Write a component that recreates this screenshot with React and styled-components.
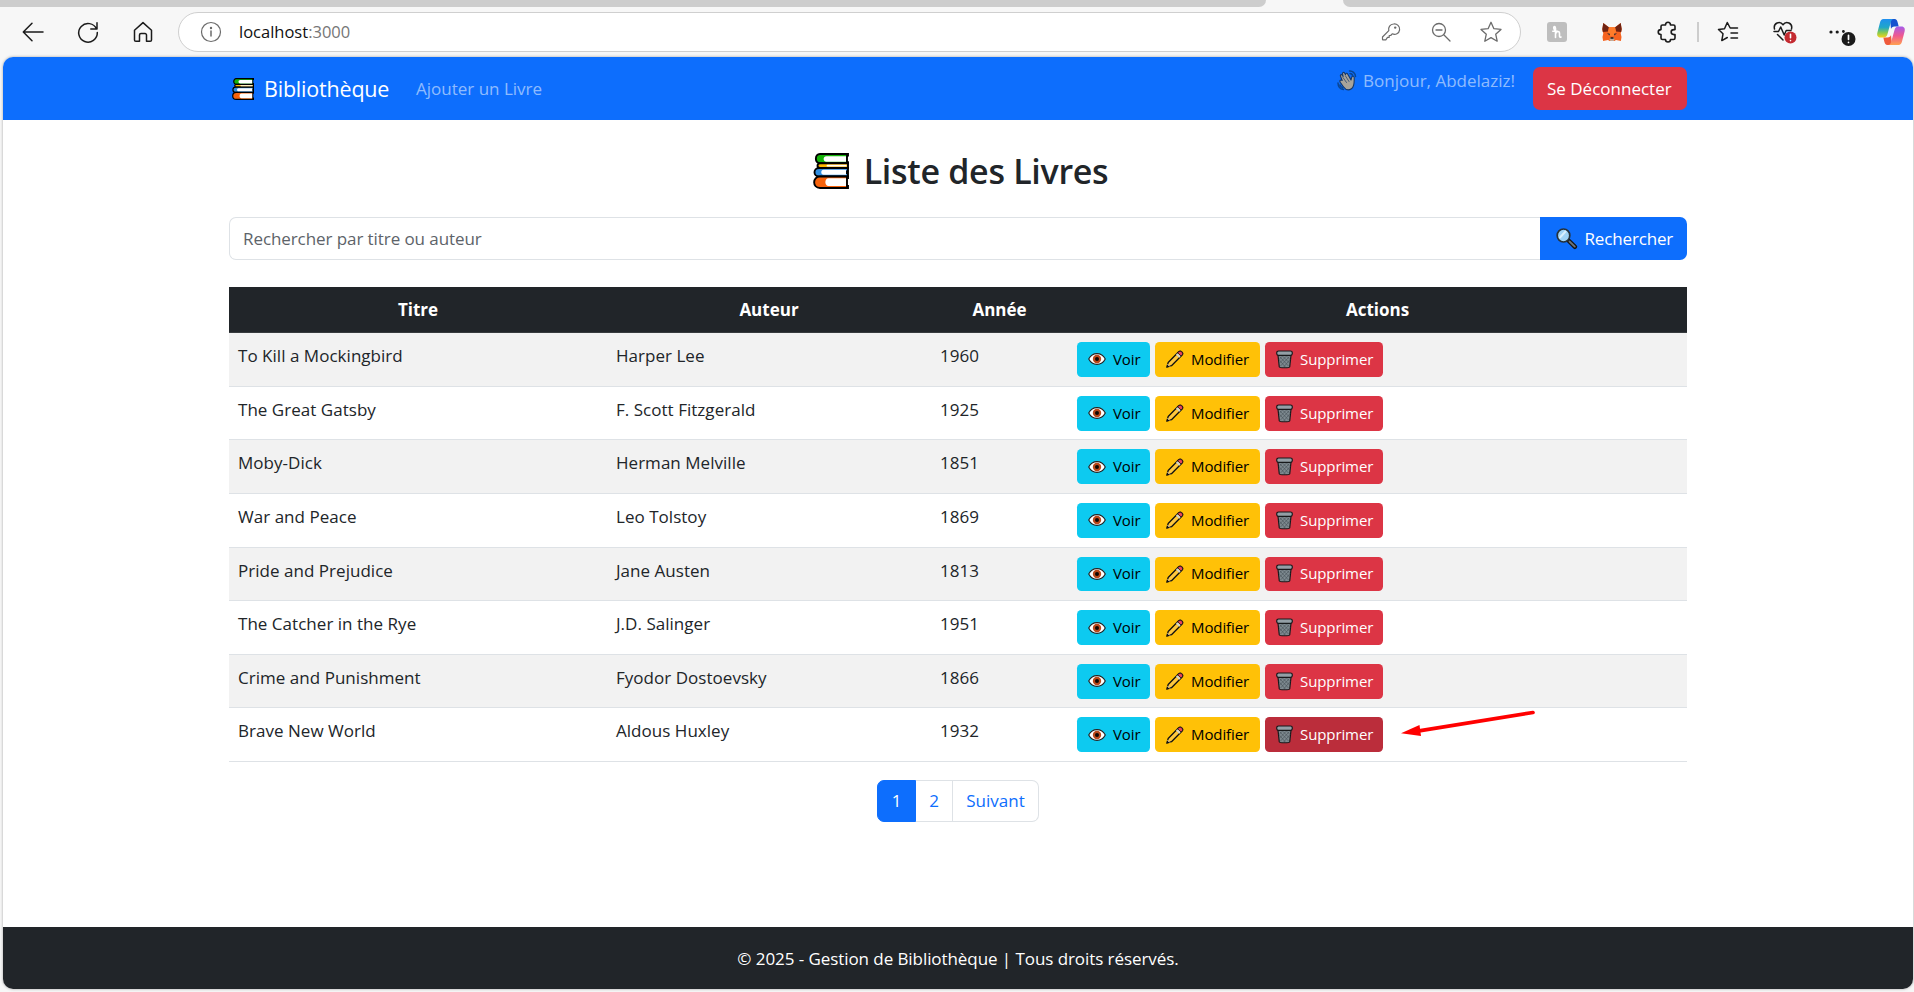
import React from "react";
import styled, { createGlobalStyle, css } from "styled-components";

const GlobalStyle = createGlobalStyle`
  *, *::before, *::after { box-sizing: border-box; }
  html, body { margin: 0; height: 100%; overflow: hidden; background: #f7f7f7; }
  body { font-family: "Open Sans", "Noto Sans", sans-serif; font-size: 17px; line-height: 27px; color: #212529; }
  button, input { font: inherit; letter-spacing: inherit; }
`;

/* ---------- browser chrome ---------- */

const Window = styled.div`
  height: 992px;
  display: flex;
  flex-direction: column;
  background: #f7f7f7;
`;
const TabStrip = styled.div`
  height: 7px;
  flex: none;
  display: flex;
  justify-content: space-between;
  background: #f7f7f7;
`;
const InactiveTabs = styled.div`
  width: ${(p) => p.$width}px;
  background: #cdcdcd;
  border-radius: ${(p) => (p.$side === "left" ? "0 0 9px 0" : "0 0 0 9px")};
`;
const Toolbar = styled.div`
  height: 50px;
  flex: none;
  display: flex;
  align-items: center;
  color: #1b1b1b;
`;
const ToolIcons = styled.div`
  display: flex;
  align-items: center;
  width: 178px;
  padding-left: 21px;
  gap: 31px;
`;
const AddressBar = styled.div`
  width: 1343px;
  height: 40px;
  display: flex;
  align-items: center;
  padding: 0 17px 0 21px;
  border: 1px solid #cfcfcf;
  border-radius: 20px;
  background: #fff;
  color: #6b6b6b;
`;
const Url = styled.span`
  flex: 1;
  padding: 0 0 2px 17px;
  font-size: 16.5px;
  color: #767676;
  b { font-weight: 400; color: #111; }
`;
const AddressActions = styled.div`
  display: flex;
  align-items: center;
  gap: 27px;
`;
const Extensions = styled.div`
  display: grid;
  grid-template-columns: 55px 55px 55px 7px 53px 59px 57px 41px;
  align-items: center;
  justify-items: center;
  padding-left: 8.5px;
`;
const Separator = styled.span`
  width: 2px;
  height: 20px;
  background: #cdcdcd;
`;
const Glyph = styled.svg`
  display: block;
  flex: none;
  width: ${(p) => p.$w || 24}px;
  height: ${(p) => p.$h || p.$w || 24}px;
  overflow: visible;
  fill: none;
  stroke: currentColor;
  stroke-width: ${(p) => p.$stroke || 1.5};
  stroke-linecap: round;
  stroke-linejoin: round;
`;

const Back = () => (
  <Glyph viewBox="0 0 24 24"><path d="M22 12H2.5M11 3.2 2.3 12l8.700 8.800" /></Glyph>
);
const Reload = () => (
  <Glyph viewBox="0 0 24 24"><path d="M20.500 9A9.300 9.300 0 1 0 21.300 12.500M21 2.800V9H14.800" /></Glyph>
);
const Home = () => (
  <Glyph viewBox="0 0 24 24"><path d="M3.500 10.300 12 2.600l8.500 7.700V20a1.300 1.300 0 0 1-1.300 1.300H15.500V15a1.500 1.500 0 0 0-1.500-1.500h-4A1.500 1.500 0 0 0 8.500 15v6.300H4.800A1.300 1.300 0 0 1 3.500 20z" /></Glyph>
);
const Info = () => (
  <Glyph $w={22} $stroke={1.2} viewBox="0 0 22 22">
    <circle cx="11" cy="11" r="9.500" /><path d="M11 10v5" strokeWidth="1.500" /><circle cx="11" cy="7" r=".6" fill="currentColor" />
  </Glyph>
);
const Key = () => (
  <Glyph $w={22} $stroke={1.2} viewBox="0 0 22 22">
    <path d="M12.500 3a5.200 5.200 0 1 1-1.300 9.800L9.700 14.500H8.200V16.300H6.500L4.800 18.800H2Q1.500 18.800 1.500 18.200V16L7.800 9.600A5.200 5.200 0 0 1 12.500 3z" /><circle cx="14.200" cy="6.600" r="1.200" fill="currentColor" stroke="none" />
  </Glyph>
);
const ZoomOut = () => (
  <Glyph $w={22} $stroke={1.3} viewBox="0 0 22 22"><circle cx="9" cy="9" r="6.500" /><path d="M14 14l6 6M6 9h6" /></Glyph>
);
const StarOutline = () => (
  <Glyph $w={24} $stroke={1.3} viewBox="0 0 24 24"><path d="M12 2.300 14.900 8.700 22 9.400 16.700 14.200 18.200 21.200 12 17.600 5.800 21.200 7.300 14.200 2 9.400 9.100 8.700z" /></Glyph>
);
const Honey = () => (
  <Glyph $w={20} $stroke={1.6} viewBox="0 0 20 20">
    <rect width="20" height="20" rx="3" fill="#bebebe" stroke="none" />
    <g stroke="#fff"><path d="M8.500 15.500V6.500C8.500 4 6.500 4 6.800 6.200c.2 1.600 1.500 2.200 1.700 3M8.500 12c1-3 4-3.500 4-.5V14c0 1 .8 1.500 1.500 1M5.800 9.200h5" /></g>
  </Glyph>
);
const Fox = () => (
  <Glyph $w={20} $h={18} viewBox="0 0 20 18">
    <g stroke="none">
      <path d="M1.300 0 7 4.200h6L18.700 0l1 6.500-1 4 .8 3.500-.6 4-4.900-1-1.500 1h-5L6 17l-4.900 1L.5 14l.8-3.500-1-4z" fill="#f5621f" />
      <path d="M1.300 0 7 4.500 6 8.500.8 9 .3 6zM18.700 0 13 4.500l1 4 5.200.5.5-3z" fill="#6f2312" />
      <path d="M6 8.500 7 4.200h6l1 4.300L11.800 13H8.200z" fill="#ff7c2a" />
      <path d="M5 10.200l3 .6-.4 1.700zM15 10.200l-3 .6.4 1.700z" fill="#2b2f3a" />
      <path d="M8 14.800h4l.4 2-.9 1.200h-3l-.9-1.200z" fill="#c0ad9e" /><path d="M8.600 14.300h2.800l.2 1.500H8.400z" fill="#161616" />
    </g>
  </Glyph>
);
const Puzzle = () => (
  <Glyph $w={22} $stroke={1.6} viewBox="0 0 22 22"><path d="M6.500 4H9.500C9.500.4 14.500.4 14.500 4H17.500Q19 4 19 5.500V8.600H18C14.200 8.600 14.200 13.600 18 13.600H19V17Q19 18.500 17.500 18.500H14.500C14.500 21.800 9.500 21.800 9.500 18.500H6.500Q5 18.500 5 17V13.600C1.300 13.600 1.300 8.600 5 8.600V5.500Q5 4 6.500 4z" /></Glyph>
);
const Favorites = () => (
  <Glyph $w={22} viewBox="0 0 22 22"><path d="M20.500 7H13.200L10.300 1.500 7.500 7.700 1.500 8.500 6 12.800 4.800 19.600 10.300 16.500M14 12h6.500M14 17h6.500" /></Glyph>
);
const Health = () => (
  <Glyph $w={24} $h={24} viewBox="0 0 24 24">
    <path d="M2.500 9C1 3 8 .5 11 4.800 14 .5 21 3 19.500 9M5.500 14.500l5.500 5.500M2 11.500h4.500L8.700 7l3.500 8 2-4.500H19" stroke="#1b1b1b" />
    <circle cx="18.500" cy="17.500" r="6" fill="#c42b31" stroke="none" /><path d="M18.500 14.300v3.500M18.500 20.500v.1" stroke="#fff" strokeWidth="1.600" />
  </Glyph>
);
const More = () => (
  <Glyph $w={28} $h={24} viewBox="0 0 28 24">
    <g stroke="none" fill="#1b1b1b"><circle cx="3" cy="12" r="1.600" /><circle cx="9.200" cy="12" r="1.600" /><circle cx="15.400" cy="11.500" r="1.400" /><circle cx="20.500" cy="19" r="7" /></g>
    <path d="M20.500 15.300v4M20.500 22.400v.1" stroke="#fff" strokeWidth="1.700" />
  </Glyph>
);
const Copilot = () => (
  <Glyph $w={28} $h={26} viewBox="0 0 28 26">
    <defs>
      <linearGradient id="cpBlue" x1="0" y1="0" x2="0" y2="1"><stop offset="0" stopColor="#1f8ff0" /><stop offset=".45" stopColor="#20a7c9" /><stop offset=".75" stopColor="#8ccb4c" /><stop offset="1" stopColor="#f7d21c" /></linearGradient>
      <linearGradient id="cpPink" x1="0" y1="0" x2="0" y2="1"><stop offset="0" stopColor="#a65bea" /><stop offset=".5" stopColor="#f0588f" /><stop offset="1" stopColor="#ffa14f" /></linearGradient>
    </defs>
    <g stroke="none">
      <path d="M13 0h4.500c2 0 2.600 1.500 3.200 3.500L21.700 7.500h-4.200c-2 0-3 1-3.500 2.500z" fill="#1551cf" />
      <path d="M15 26h-4.500c-2 0-2.600-1.500-3.200-3.500L6.300 18.500h4.200c2 0 3-1 3.500-2.500z" fill="#ef5a3c" />
      <path d="M6.500 0H17c-2 0-2.700 1.500-3.300 3.500L10.500 15c-.6 2-1.500 3.500-4 3.500H3.500C.5 18.500-.3 16 .4 13.500L3 3.500C3.600 1.200 4.500 0 6.500 0z" fill="url(#cpBlue)" />
      <path d="M21.500 26H11c2 0 2.700-1.500 3.300-3.500L17.500 11c.6-2 1.500-3.500 4-3.500h3c3 0 3.800 2.500 3.100 5L25 22.500c-.6 2.300-1.500 3.500-3.500 3.500z" fill="url(#cpPink)" />
    </g>
  </Glyph>
);

/* ---------- pictograms ---------- */

const Pict = styled(Glyph)`
  opacity: ${(p) => p.$opacity || 1};
`;
const Books = ({ size }) => (
  <Pict $w={size} viewBox="0 0 36 36">
    <g stroke="#000" strokeWidth="1.900" strokeLinejoin="miter" strokeLinecap="butt">
      <path d="M35 1H7C1.500 1 1.500 10.300 7 10.300H35V9.300H34V2.500H35z" fill="#16b30b" />
      <path d="M35 10.300H7.500C3.500 10.300 3.500 15 7.500 15H35z" fill="#ffb900" />
      <path d="M35 15H6C0 15 0 23.500 6 23.500H35V20H34V18.500H35z" fill="#2f8de0" />
      <path d="M35 23.500H7C-.8 23.500-.8 35 7 35H35V33H34V25H35z" fill="#f7630c" />
    </g>
    <g stroke="none" fill="#fff">
      <path d="M33 3.200H13.500c-3.800 0-3.800 5.600 0 5.600H33z" /><path d="M33.500 11.700H14.500q-2 .9 0 1.900H33.500z" />
      <path d="M33 16.800H10.500c-3 0-3 5 0 5H33z" /><path d="M33 25.200H15.500c-4.200 0-4.200 7.800 0 7.800H33z" />
    </g>
  </Pict>
);
const Wave = () => (
  <Pict $w={20} $h={21} $opacity={0.65} viewBox="0 0 20 21">
    <path d="M5.200 10.500 3.600 6.500c-.8-1.800 1-2.600 2-1l.5 1L5.500 4c-.3-1.800 1.500-2.200 2.200-.7l.8 1.500c0-1.800 1.600-2 2.300-.6l3.200 5.800.7-2.700c.5-1.700 2.500-1.300 2.500.5 0 5 .5 8.700-2.800 11-3 2-6 .8-8-2L3.200 12.200c-1-1.700.8-2.800 2-1.700z" fill="#fcc266" stroke="#1b1b1b" strokeWidth="1.100" />
    <path d="M6 7.500l3.500 5M8.500 6l3.500 5.500" stroke="#1b1b1b" strokeWidth=".7" />
    <path d="M12.500 1c3-.3 5.800 2 6 5.500M13 3.500c1.500.2 2.700 1.300 2.900 2.800M1 13c.1 3.500 2.200 6 5.500 6.500M3 15c.5 1.500 1.500 2.300 2.800 2.700" stroke="#08305c" strokeWidth="1.500" />
  </Pict>
);
const Loupe = () => (
  <Pict $w={21} viewBox="0 0 21 21">
    <path d="M12.500 12.500l6.500 6.300" stroke="#141414" strokeWidth="4.400" /><path d="M13.500 13.500l5.300 5.100" stroke="#6c757b" strokeWidth="1.900" />
    <ellipse cx="7.500" cy="7.500" rx="6.300" ry="6.500" fill="#9fd2f5" stroke="#26323a" strokeWidth="1.700" />
    <path d="M4 9.500 9.500 3.500" stroke="#d8effd" strokeWidth="2" />
  </Pict>
);
const Eye = () => (
  <Pict $w={18} $h={14} viewBox="0 0 18 14">
    <path d="M.7 7C4.500-.2 13.500-.2 17.300 7 13.500 14.200 4.500 14.200.7 7z" fill="#fff" stroke="#222" strokeWidth="1.100" />
    <circle cx="9" cy="7" r="4.200" fill="#b9481a" stroke="none" /><circle cx="9" cy="7" r="2" fill="#100804" stroke="none" />
  </Pict>
);
const Pencil = () => (
  <Pict $w={18} viewBox="0 0 18 18">
    <path d="M.8 17.200 2.200 12.500 12.700 1.800c2-1.900 5.200 1.200 3.400 3.200L5.500 15.700z" fill="#ffc83d" stroke="#111" strokeWidth="1.300" />
    <path d="M12.700 1.800c2-1.900 5.200 1.200 3.400 3.200l-1 1-3.400-3.200z" fill="#e8455a" stroke="#111" strokeWidth=".8" /><path d="M11.300 3.300l3.300 3.200-1.300 1.300-3.300-3.200z" fill="#cfd4d8" stroke="none" />
    <path d="M1.700 14.300l2 2" stroke="#e9d2b0" strokeWidth="1" /><path d="M.8 17.200l.7-2.200 1.500 1.500z" fill="#111" stroke="none" />
  </Pict>
);
const Trash = () => (
  <Pict $w={17} $h={19} viewBox="0 0 17 19">
    <path d="M1.800 3.500 3.300 17c.2 1 10.200 1 10.400 0L15.200 3.500z" fill="#7d898f" stroke="#16191b" strokeWidth="1.200" />
    <path d="M4 7l8.500 9M3.800 10.500l5.500 6.500M7 6.500l6.500 6.500M11 6.500l3 3M13 7l-8.500 9M13.200 10.500 7.700 17M10 6.500l-6.300 6.500M6 6.500l-2.800 3" stroke="#454f55" strokeWidth=".6" />
    <rect x=".7" y="1" width="15.600" height="4.300" rx="1.800" fill="#939fa6" stroke="#16191b" strokeWidth="1.200" />
  </Pict>
);

/* ---------- page ---------- */

const Page = styled.div`
  width: 1910px;
  height: 932px;
  margin-left: 3px;
  flex: none;
  display: flex;
  flex-direction: column;
  overflow: hidden;
  border-radius: 10px;
  background: #fff;
  box-shadow: 0 0 3px rgba(0, 0, 0, 0.35);
`;
const Navbar = styled.nav`
  height: 63px;
  flex: none;
  background: #0d6efd;
`;
const Container = styled.div`
  width: 1458px;
  margin-left: 226px;
`;
const NavInner = styled(Container)`
  height: 63px;
  display: flex;
  align-items: center;
  padding-left: 3px;
`;
const Brand = styled.span`
  display: flex;
  align-items: center;
  gap: 10px;
  width: 184px;
  color: #fff;
  font-size: 21.5px;
  letter-spacing: -0.2px;
`;
const NavLink = styled.span`
  color: rgba(255, 255, 255, 0.55);
  flex: 1;
`;
const Greeting = styled.span`
  display: flex;
  align-items: center;
  gap: 6px;
  height: 43px;
  padding-bottom: 16px;
  margin-right: 18px;
  color: rgba(255, 255, 255, 0.55);
`;
const tones = {
  primary: css`background: #0d6efd; color: #fff;`,
  danger: css`background: #dc3545; color: #fff;`,
  dangerActive: css`background: #bb2d3b; color: #fff;`,
  info: css`background: #0dcaf0; color: #000;`,
  warning: css`background: #ffc107; color: #000;`,
};
const Button = styled.button`
  display: flex;
  align-items: center;
  height: 43px;
  width: ${(p) => p.$width}px;
  padding: 0 0 0 14px;
  border: 0;
  border-radius: 7px;
  white-space: nowrap;
  ${(p) => tones[p.$tone]}
`;
const SearchButton = styled(Button)`
  padding-left: 16px;
  gap: 7.5px;
  border-radius: 0 7px 7px 0;
  letter-spacing: -0.15px;
`;
const SmallButton = styled(Button)`
  height: 34.875px;
  padding-left: 11px;
  gap: 7px;
  border-radius: 4.500px;
  font-size: 15px;
  letter-spacing: -0.1px;
`;
const Title = styled.h1`
  display: flex;
  justify-content: center;
  align-items: center;
  gap: 15px;
  height: 43px;
  margin: 30px 0 24px;
  padding: 0 0 1px 5px;
  font-size: 34px;
  font-weight: 600;
  letter-spacing: -0.3px;
`;
const Search = styled.div`
  display: flex;
  height: 43px;
  margin-bottom: 27px;
`;
const SearchInput = styled.input`
  flex: 1;
  padding: 0 13px;
  border: 1px solid #dee2e6;
  border-right: 0;
  border-radius: 7px 0 0 7px;
  outline: 0;
  background: #fff;
  &::placeholder { color: #5d6369; opacity: 1; letter-spacing: -0.08px; }
`;
const TableRow = styled.div`
  display: grid;
  grid-template-columns: 378px 324px 137px 1fr;
  height: 53.625px;
  padding-top: 9px;
  border-bottom: 1px solid #dee2e6;
  background: ${(p) => (p.$odd ? "#f2f2f2" : "#fff")};
`;
const HeadRow = styled(TableRow)`
  height: 46px;
  border-color: #373b3e;
  background: #212529;
  color: #fff;
  font-weight: 700;
  text-align: center;
`;
const Cell = styled.div`
  padding-left: 9px;
  letter-spacing: 0.03px;
`;
const Actions = styled(Cell)`
  display: flex;
  gap: 5px;
`;
const Pagination = styled.div`
  display: flex;
  justify-content: center;
  height: 42px;
  margin-top: 18px;
`;
const PageItem = styled.span`
  width: ${(p) => p.$width}px;
  line-height: 40px;
  text-align: center;
  color: #0d6efd;
  border: 1px solid #dee2e6;
  border-left-width: ${(p) => (p.$joined ? 0 : 1)}px;
  &:first-child { border-radius: 7px 0 0 7px; }
  &:last-child { border-radius: 0 7px 7px 0; }
  ${(p) => p.$active && css`background: #0d6efd; border-color: #0d6efd; color: #fff;`}
`;
const Main = styled.main`
  flex: 1;
`;
const Footer = styled.footer`
  height: 62px;
  flex: none;
  padding-top: 18px;
  background: #212529;
  color: #fff;
  text-align: center;
  letter-spacing: -0.07px;
`;
const Pointer = styled.svg`
  position: absolute;
  left: 1395px;
  top: 705px;
  width: 145px;
  height: 36px;
`;

const books = [
  ["To Kill a Mockingbird", "Harper Lee", 1960],
  ["The Great Gatsby", "F. Scott Fitzgerald", 1925],
  ["Moby-Dick", "Herman Melville", 1851],
  ["War and Peace", "Leo Tolstoy", 1869],
  ["Pride and Prejudice", "Jane Austen", 1813],
  ["The Catcher in the Rye", "J.D. Salinger", 1951],
  ["Crime and Punishment", "Fyodor Dostoevsky", 1866],
  ["Brave New World", "Aldous Huxley", 1932],
];

export default function App() {
  return (
    <>
      <GlobalStyle />
      <Window>
        <TabStrip><InactiveTabs $width={1266} $side="left" /><InactiveTabs $width={571} $side="right" /></TabStrip>
        <Toolbar>
          <ToolIcons><Back /><Reload /><Home /></ToolIcons>
          <AddressBar>
            <Info />
            <Url><b>localhost</b>:3000</Url>
            <AddressActions><Key /><ZoomOut /><StarOutline /></AddressActions>
          </AddressBar>
          <Extensions>
            <Honey /><Fox /><Puzzle /><Separator /><Favorites /><Health /><More /><Copilot />
          </Extensions>
        </Toolbar>
        <Page>
          <Navbar>
            <NavInner>
              <Brand><Books size={22} />Bibliothèque</Brand>
              <NavLink>Ajouter un Livre</NavLink>
              <Greeting><Wave />Bonjour, Abdelaziz!</Greeting>
              <Button $tone="danger" $width={154}>Se Déconnecter</Button>
            </NavInner>
          </Navbar>
          <Main>
            <Container>
              <Title><Books size={36} />Liste des Livres</Title>
              <Search>
                <SearchInput placeholder="Rechercher par titre ou auteur" />
                <SearchButton $tone="primary" $width={147}><Loupe />Rechercher</SearchButton>
              </Search>
              <HeadRow>{["Titre", "Auteur", "Année", "Actions"].map((h) => <div key={h}>{h}</div>)}</HeadRow>
              {books.map(([title, author, year], i) => (
                <TableRow key={title} $odd={i % 2 === 0}>
                  <Cell>{title}</Cell>
                  <Cell>{author}</Cell>
                  <Cell>{year}</Cell>
                  <Actions>
                    <SmallButton $tone="info" $width={73}><Eye />Voir</SmallButton>
                    <SmallButton $tone="warning" $width={105}><Pencil />Modifier</SmallButton>
                    <SmallButton $tone={i === 7 ? "dangerActive" : "danger"} $width={118}><Trash />Supprimer</SmallButton>
                  </Actions>
                </TableRow>
              ))}
              <Pagination>
                <PageItem $width={39} $active>1</PageItem>
                <PageItem $width={37} $joined>2</PageItem>
                <PageItem $width={86} $joined>Suivant</PageItem>
              </Pagination>
            </Container>
          </Main>
          <Footer>© 2025 - Gestion de Bibliothèque | Tous droits réservés.</Footer>
        </Page>
        <Pointer viewBox="0 0 145 36">
          <path d="M138 7.500 24 25.800" stroke="#f00" strokeWidth="3.700" strokeLinecap="round" />
          <path d="M6 28.300 24.500 20 26 31z" fill="#f00" />
        </Pointer>
      </Window>
    </>
  );
}
